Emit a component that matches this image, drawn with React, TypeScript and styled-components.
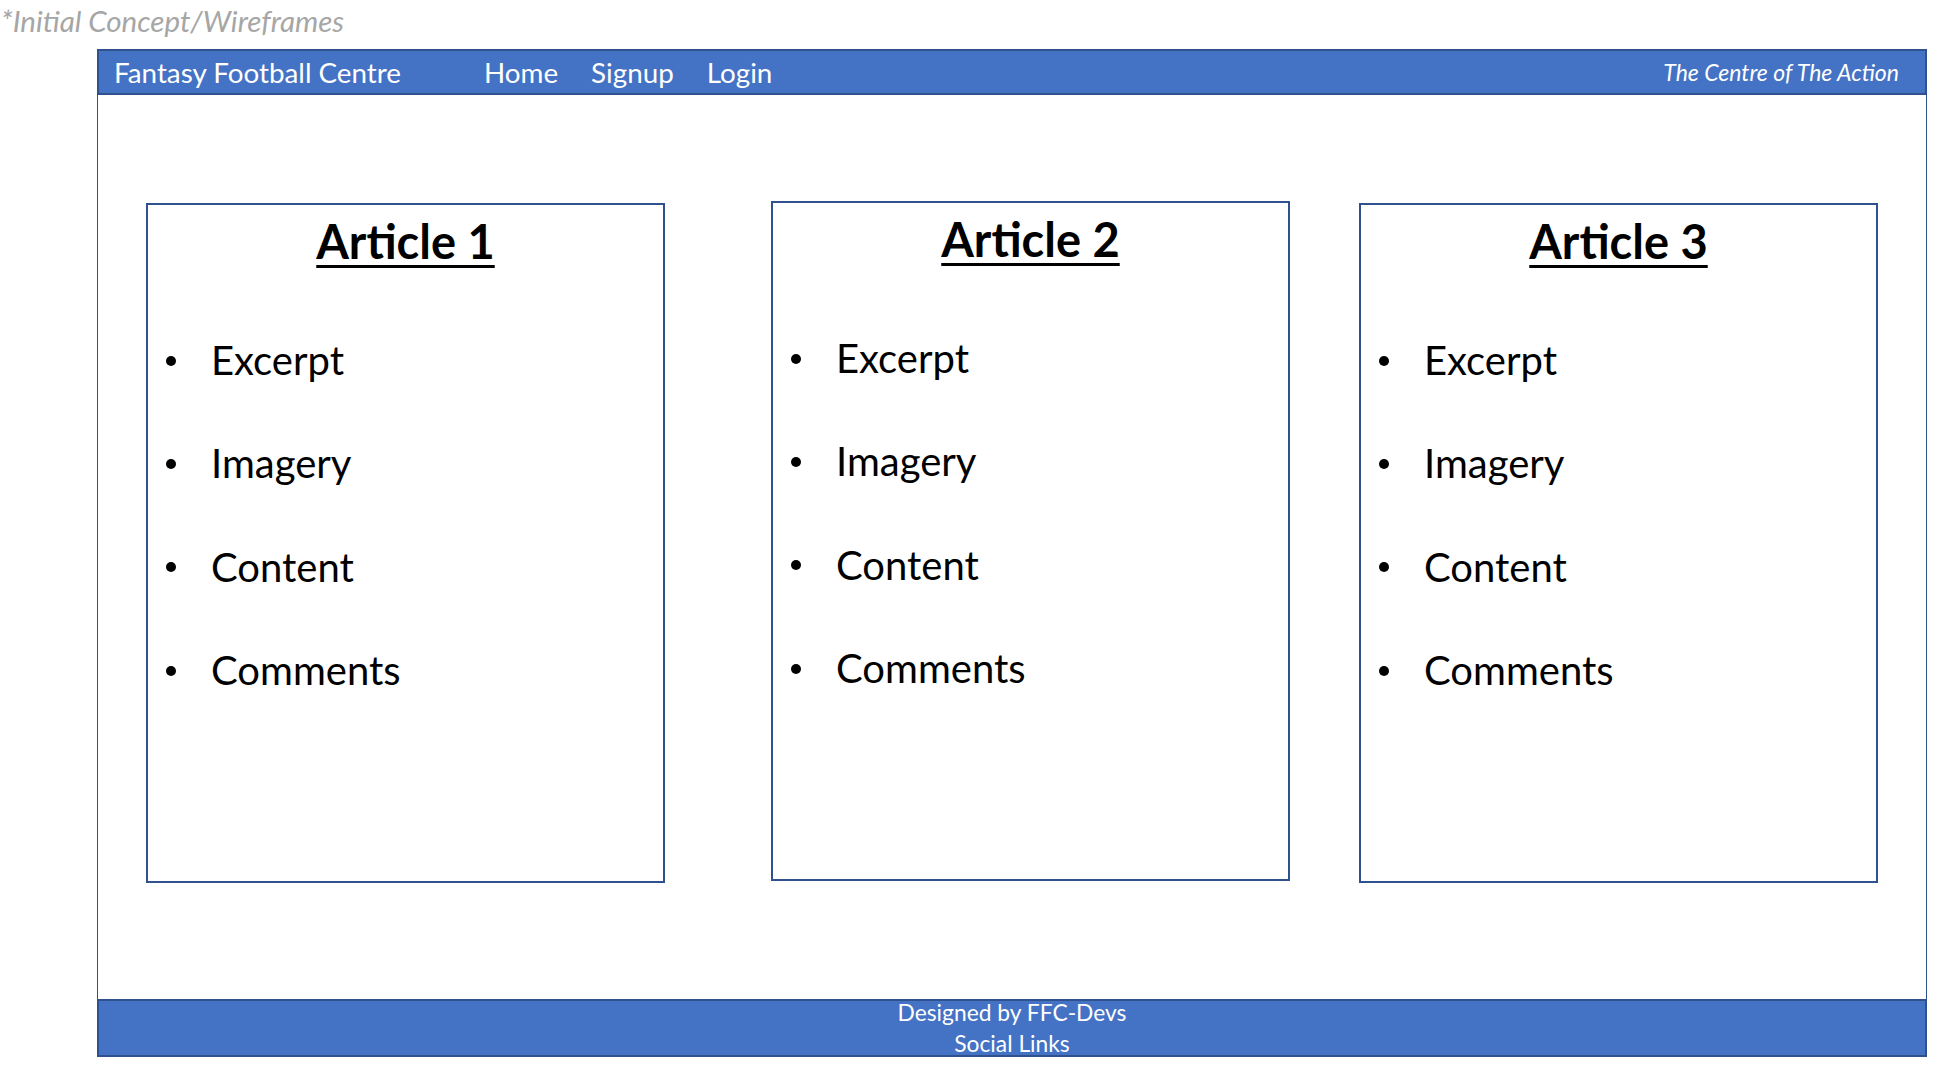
import React from "react";
import styled, { createGlobalStyle } from "styled-components";

const GlobalStyle = createGlobalStyle`
  html, body {
    margin: 0;
    padding: 0;
    background: #ffffff;
  }
  body {
    font-family: Lato, "Open Sans", "Noto Sans", sans-serif;
    width: 1960px;
    height: 1078px;
    overflow: hidden;
  }
`;

const Page = styled.div`
  display: flex;
  flex-direction: column;
`;

const Caption = styled.div`
  height: 49px;
  line-height: 42px;
  padding-left: 1px;
  font-size: 29.5px;
  font-style: italic;
  color: #a6a6a6;
  white-space: nowrap;
`;

const Frame = styled.div`
  margin-left: 97px;
  width: 1830px;
  display: flex;
  flex-direction: column;
`;

const NavBar = styled.header`
  height: 46px;
  box-sizing: border-box;
  background: #4472c4;
  border: 2px solid #2f528f;
  display: flex;
  align-items: center;
  padding: 0 26px 0 15px;
  color: #ffffff;
  font-size: 27.8px;
  white-space: nowrap;
`;

const Brand = styled.div`
  width: 370px;
  flex: none;
`;

const NavLinks = styled.nav`
  display: flex;
  gap: 33px;
`;

const NavLink = styled.span`
  cursor: pointer;
`;

const Tagline = styled.div`
  margin-left: auto;
  font-size: 23px;
  font-style: italic;
`;

const Main = styled.main`
  height: 904px;
  box-sizing: border-box;
  border-left: 1px solid #2f528f;
  border-right: 1px solid #2f528f;
  display: flex;
  align-items: flex-start;
  padding-top: 108px;
`;

const Card = styled.article<{ $dx: number; $dy: number }>`
  width: 519px;
  height: 680px;
  flex: none;
  box-sizing: border-box;
  border: 2px solid #2f528f;
  margin-left: ${(p) => p.$dx}px;
  margin-top: ${(p) => p.$dy}px;
  padding-top: 6px;
  display: flex;
  flex-direction: column;
  color: #000000;
`;

const CardTitle = styled.h2`
  margin: 0;
  text-align: center;
  font-size: 47px;
  font-weight: 700;
  line-height: 60px;
  text-decoration: underline;
  text-decoration-thickness: 3px;
  text-underline-offset: 6px;
`;

const List = styled.ul`
  margin: 38px 0 0;
  padding: 0;
  list-style: none;
`;

const Item = styled.li`
  display: flex;
  align-items: center;
  height: 103.3px;
  font-size: 40px;
  line-height: 103.3px;
`;

const Bullet = styled.span`
  flex: none;
  width: 10px;
  height: 10px;
  border-radius: 50%;
  background: #000000;
  margin-left: 18px;
  margin-right: 35px;
`;

const Footer = styled.footer`
  height: 58px;
  box-sizing: border-box;
  background: #4472c4;
  border: 2px solid #2f528f;
  color: #ffffff;
  font-size: 22.8px;
  line-height: 31px;
  display: flex;
  flex-direction: column;
  align-items: center;
  justify-content: center;
  overflow: visible;
`;

const FooterLine = styled.div`
  white-space: nowrap;
`;

const articles = [
  { title: "Article 1", dx: 48, dy: 0 },
  { title: "Article 2", dx: 106, dy: -2 },
  { title: "Article 3", dx: 69, dy: 0 },
];

const items = ["Excerpt", "Imagery", "Content", "Comments"];

export default function App() {
  return (
    <>
      <GlobalStyle />
      <Page>
        <Caption>*Initial Concept/Wireframes</Caption>
        <Frame>
          <NavBar>
            <Brand>Fantasy Football Centre</Brand>
            <NavLinks>
              <NavLink>Home</NavLink>
              <NavLink>Signup</NavLink>
              <NavLink>Login</NavLink>
            </NavLinks>
            <Tagline>The Centre of The Action</Tagline>
          </NavBar>
          <Main>
            {articles.map((a) => (
              <Card key={a.title} $dx={a.dx} $dy={a.dy}>
                <CardTitle>{a.title}</CardTitle>
                <List>
                  {items.map((it) => (
                    <Item key={it}>
                      <Bullet />
                      {it}
                    </Item>
                  ))}
                </List>
              </Card>
            ))}
          </Main>
          <Footer>
            <FooterLine>Designed by FFC-Devs</FooterLine>
            <FooterLine>Social Links</FooterLine>
          </Footer>
        </Frame>
      </Page>
    </>
  );
}
